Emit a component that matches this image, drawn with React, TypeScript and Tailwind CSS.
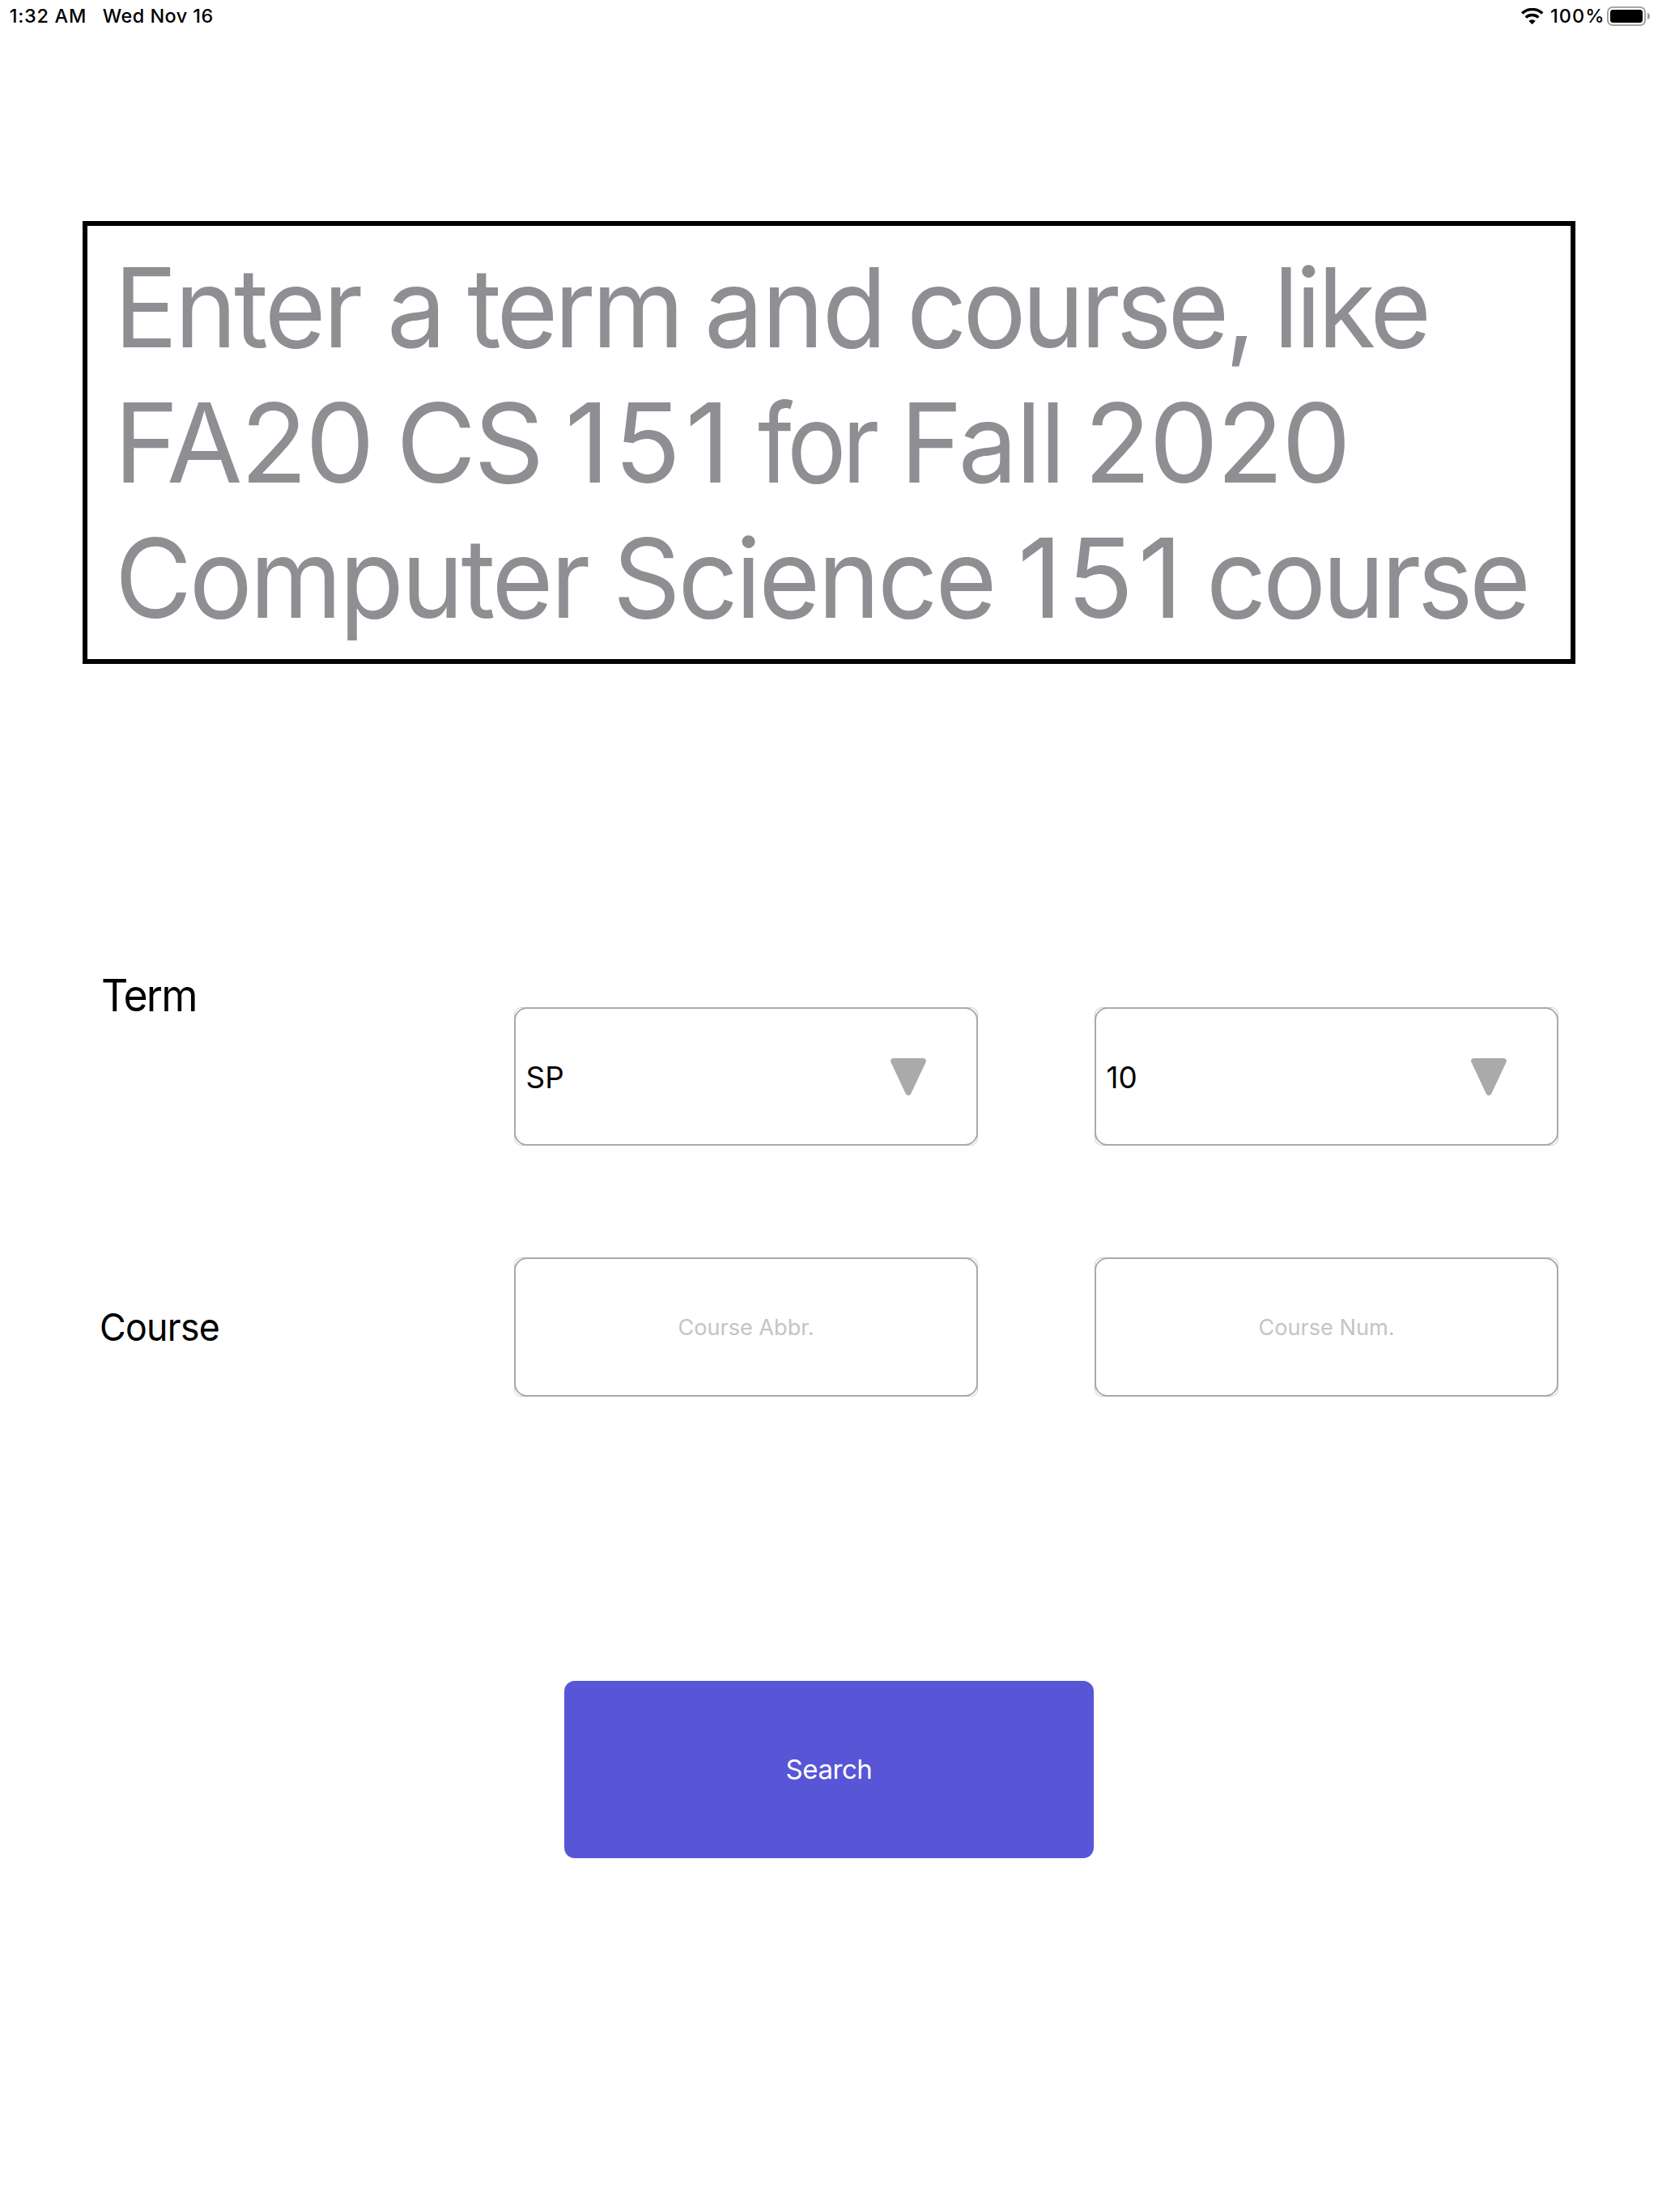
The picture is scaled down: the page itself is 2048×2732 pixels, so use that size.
import type { ReactNode } from "react";

function WifiIcon() {
  return (
    <svg width="27.4" height="20.4" viewBox="0 0 82 61" fill="none">
      <path d="M3.5 19.5A55 55 0 0 1 78.5 19.5" stroke="#000" strokeWidth="10.5" />
      <path d="M17 34.2A35 35 0 0 1 64 34.2" stroke="#000" strokeWidth="10.5" />
      <path d="M28 47.5A18 18 0 0 1 53 47.5L42.5 58.6Q40.5 60.6 38.5 58.6Z" fill="#000" />
    </svg>
  );
}

function BatteryIcon() {
  return (
    <svg width="54" height="24" viewBox="0 0 54 24" fill="none">
      <rect x="0.9" y="0.9" width="46.2" height="22.2" rx="6.2" stroke="#9b9b9b" strokeWidth="1.8" />
      <rect x="4" y="4" width="40" height="16" rx="3.4" fill="#000" />
      <path d="M50 7.5V16.5C51.8 15.8 53 14 53 12S51.8 8.2 50 7.5Z" fill="#9b9b9b" />
    </svg>
  );
}

function StatusBar() {
  return (
    <header className="flex h-[40px] items-start justify-between pt-[6px] pl-[11.7px] text-[23.4px] leading-[28px] font-[450]">
      <div className="flex">
        <span className="tracking-[0.76px]">1:32 AM</span>
        <span className="ml-[19.7px] tracking-[0.48px]">Wed Nov 16</span>
      </div>
      <div className="flex items-start pr-[9px]">
        <div className="mt-[4px]">
          <WifiIcon />
        </div>
        <span className="ml-[8.2px] tracking-[1.09px]">100%</span>
        <div className="mt-[2px] ml-[2.5px]">
          <BatteryIcon />
        </div>
      </div>
    </header>
  );
}

function Word({ className = "", children }: { className?: string; children: string }) {
  return <span className={`block origin-left ${className}`}>{children + " "}</span>;
}

function Prompt() {
  return (
    <section className="mt-[233px] ml-[102px] h-[547px] w-[1844px] border-[6px] border-black pt-[18.2px] pl-[33.1px] text-[135.6px] leading-[167px] whitespace-nowrap text-[#8e8e93]">
      <div className="flex">
        <Word className="scale-x-[0.96] tracking-[-3.7px]">Enter</Word>
        <Word className="ml-[20.6px] scale-x-[0.96]">a</Word>
        <Word className="ml-[22.9px] scale-x-[0.96] tracking-[-4.9px]">term</Word>
        <Word className="ml-[18.6px] scale-x-[0.96] tracking-[-2.2px]">and</Word>
        <Word className="ml-[17.2px] scale-x-[0.96] tracking-[-5.1px]">course,</Word>
        <Word className="ml-[8.9px] scale-x-[0.96] tracking-[-4.3px]">like</Word>
      </div>
      <div className="-ml-[0.4px] flex">
        <Word className="tracking-[-2.5px]">FA20</Word>
        <Word className="ml-[29.1px] tracking-[-3.2px]">CS</Word>
        <Word className="ml-[28.7px] tracking-[5.6px]">151</Word>
        <Word className="ml-[28.9px] scale-x-[0.9] tracking-[-5.9px]">for</Word>
        <Word className="ml-[15.4px] scale-x-[0.96] tracking-[-1.9px]">Fall</Word>
        <Word className="ml-[15.8px] tracking-[-2.3px]">2020</Word>
      </div>
      <div className="ml-[0.8px] flex">
        <Word className="scale-x-[0.96] tracking-[-3.4px]">Computer</Word>
        <Word className="ml-[7.1px] scale-x-[0.96] tracking-[-3.15px]">Science</Word>
        <Word className="ml-[8.9px] tracking-[5.6px]">151</Word>
        <Word className="ml-[23.2px] scale-x-[0.96] tracking-[-4.6px]">course</Word>
      </div>
    </section>
  );
}

function Field({ className, children }: { className: string; children: ReactNode }) {
  return (
    <div className={`w-[573px] shrink-0 rounded-[9px] shadow-[inset_0_0_0_1px_#cfcfcf] ${className}`}>
      <div className="flex h-full items-center rounded-[16px] border-2 border-[#aaaaaa]">{children}</div>
    </div>
  );
}

function Select({ value, className }: { value: string; className: string }) {
  return (
    <Field className={`h-[171px] ${className}`}>
      <div className="flex w-full items-center justify-between pr-[62px] pl-[12.6px] text-[36.8px] leading-[46px]">
        <span className="pt-[2px]">{value}</span>
        <svg width="44" height="46" viewBox="0 0 44 46">
          <path
            d="M3.6 0H40.4C43 0 44.6 2.2 43.7 4.6L25.4 43.6C24 46.8 20 46.8 18.6 43.6L0.3 4.6C-0.6 2.2 1 0 3.6 0Z"
            fill="#aaaaaa"
          />
        </svg>
      </div>
    </Field>
  );
}

function Input({ placeholder, className = "" }: { placeholder: string; className?: string }) {
  return (
    <Field className={`h-[172px] ${className}`}>
      <span className="w-full pt-[2px] text-center text-[27.1px] leading-[34px] text-[#c4c4c4]">{placeholder}</span>
    </Field>
  );
}

export default function App() {
  return (
    <div className="h-[2732px] w-[2048px] overflow-hidden bg-white font-['Inter',sans-serif] text-black">
      <StatusBar />
      <Prompt />
      <div className="mt-[377px] flex h-[218px] items-start pl-[125px]">
        <div className="w-[510px]">
          <span className="block w-fit origin-left scale-x-[0.95] text-[54.4px] leading-[64px] tracking-[-1.9px]">Term</span>
        </div>
        <Select value="SP" className="mt-[47px]" />
        <Select value="10" className="mt-[47px] ml-[144px]" />
      </div>
      <div className="mt-[138px] flex h-[172px] items-center pl-[122.9px]">
        <div className="w-[512.1px]">
          <span className="block w-fit origin-left scale-x-[0.96] text-[46.5px] leading-[56px] tracking-[-0.7px]">Course</span>
        </div>
        <Input placeholder="Course Abbr." />
        <Input placeholder="Course Num." className="ml-[144px]" />
      </div>
      <button className="mt-[351px] ml-[697px] flex h-[219px] w-[654px] items-center justify-center rounded-[13px] bg-[#5856d6] pb-[2px] text-[33px] leading-[40px] tracking-[-0.45px] text-white">
        Search
      </button>
    </div>
  );
}
